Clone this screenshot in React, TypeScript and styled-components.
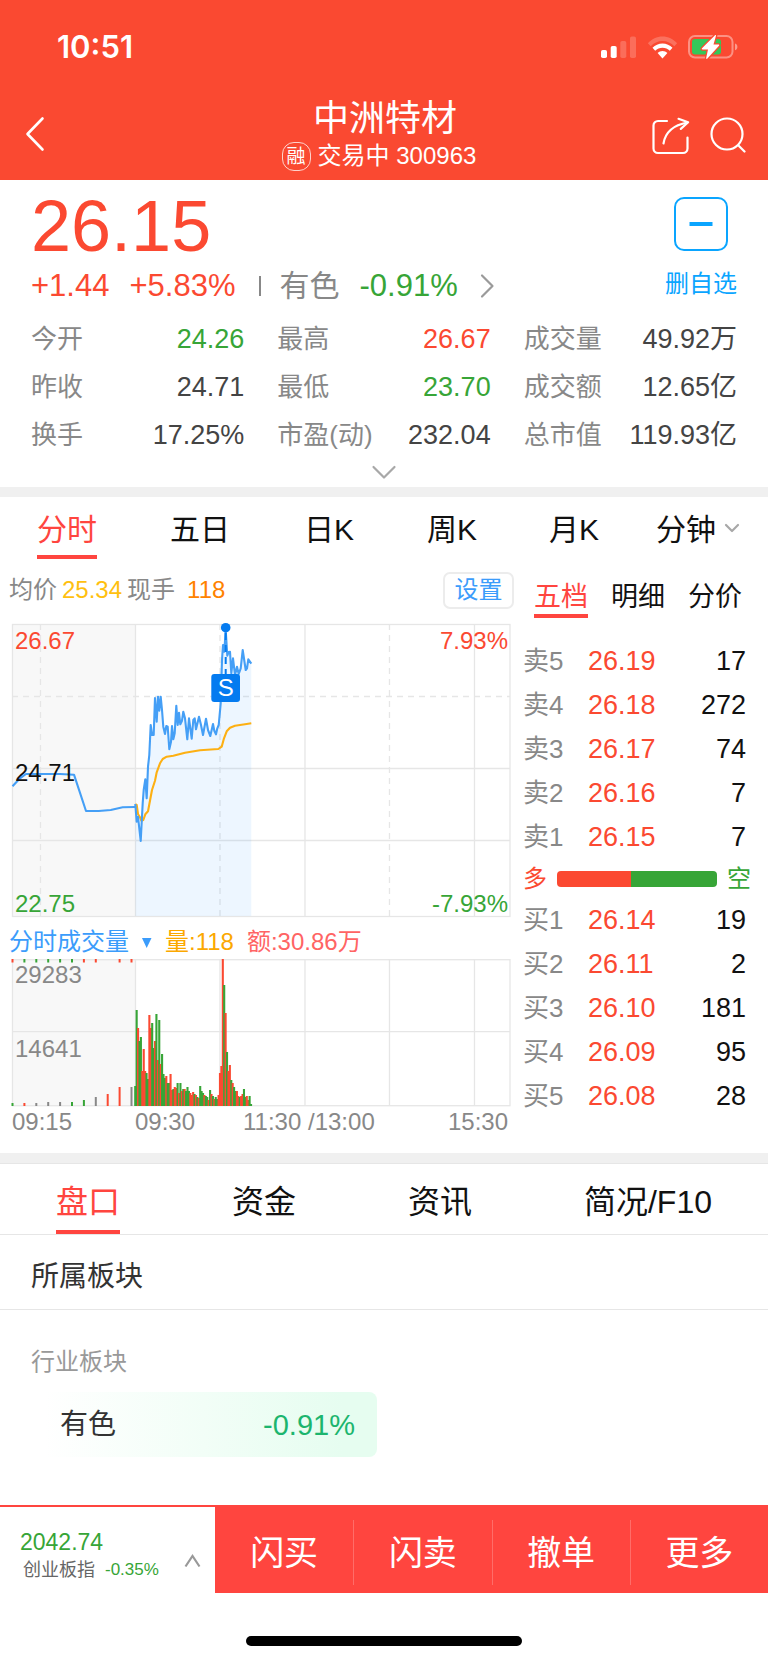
import React from 'react';
import styled, { createGlobalStyle } from 'styled-components';

const color = {
  brand: '#fa4931',
  accent: '#ff453f',
  up: '#fb4931',
  down: '#37a537',
  label: '#888888',
  value: '#444444',
  ink: '#111111',
  blue: '#3b9cfb',
  sky: '#0aa5ff',
  line: '#e6e6e6',
  band: '#f0f0f0',
};

const fontStack = '"Liberation Sans", "Noto Sans CJK SC", sans-serif';

const GlobalStyle = createGlobalStyle`
  *, *::before, *::after { box-sizing: border-box; }
  body { margin: 0; background: #fff; font-family: ${fontStack}; color: ${color.ink}; }
  button { margin: 0; padding: 0; border: 0; background: none; font: inherit; color: inherit; cursor: pointer; }
  h1, h2, h3, dl, dd, p { margin: 0; font-weight: 400; }
  svg { display: block; }
`;

const Page = styled.div`
  width: 100%;
  overflow: hidden;
`;

/* ---------- header ---------- */

const Header = styled.header`
  background: ${color.brand};
  color: #fff;
`;

const StatusBar = styled.div`
  display: flex;
  align-items: center;
  justify-content: space-between;
  height: 94px;
  padding: 0 30px 0 57px;
`;

const Clock = styled.time`
  font: 600 31px/36px Inter, sans-serif;
`;

const StatusIcons = styled.div`
  display: flex;
  align-items: center;
  gap: 10px;
`;

const NavBar = styled.nav`
  display: grid;
  grid-template-columns: 1fr auto 1fr;
  align-items: center;
  height: 86px;
  padding: 0 22px 2px 24px;
`;

const NavActions = styled.div`
  display: flex;
  justify-content: flex-end;
  gap: 20px;
`;

const TitleGroup = styled.div`
  display: flex;
  flex-direction: column;
  align-items: center;
  padding-bottom: 4px;
`;

const StockName = styled.h1`
  font-size: 36px;
  line-height: 44px;
`;

const StockMeta = styled.p`
  display: flex;
  align-items: center;
  gap: 7px;
  padding-right: 12px;
  font-size: 24px;
  line-height: 30px;
  white-space: pre;
`;

const MarginBadge = styled.span`
  width: 29px;
  height: 29px;
  border: 1px solid rgba(255, 255, 255, 0.75);
  border-radius: 12px;
  font-size: 19px;
  line-height: 27px;
  text-align: center;
`;

/* ---------- quote ---------- */

const Quote = styled.section`
  padding: 8px 31px 2px;
`;

const QuoteTop = styled.div`
  display: flex;
  justify-content: space-between;
`;

const Price = styled.div`
  color: ${color.up};
  font-size: 72px;
  line-height: 76px;
`;

const ChangeRow = styled.div`
  display: flex;
  align-items: center;
  gap: 20px;
  font-size: 31px;
  line-height: 44px;
`;

const Tone = styled.span<{ $color: string }>`
  color: ${(p) => p.$color};
`;

const SectorLink = styled.a`
  display: flex;
  align-items: center;
  gap: 20px;
  margin-left: -2px;
  color: ${color.label};
  text-decoration: none;
`;

const SectorLabel = styled.span`
  font-size: 30px;
`;

const Divider = styled.span`
  width: 2px;
  height: 20px;
  margin-left: 4px;
  background: ${color.label};
`;

const WatchButton = styled.button`
  display: flex;
  flex-direction: column;
  align-items: center;
  gap: 16px;
  align-self: flex-start;
  && {
    padding-top: 9px;
    color: ${color.sky};
    font-size: 24px;
    line-height: 34px;
  }
`;

const Stats = styled.dl`
  display: grid;
  grid-template-columns: repeat(3, 1fr);
  column-gap: 33px;
  padding-top: 7px;
  font-size: 27px;
  line-height: 48px;
`;

const Stat = styled.div`
  display: flex;
  justify-content: space-between;
  white-space: nowrap;
`;

const StatLabel = styled.dt`
  color: ${color.label};
  font-size: 26px;
`;

const StatValue = styled.dd<{ $color?: string }>`
  color: ${(p) => p.$color ?? color.value};
`;

const ExpandButton = styled.button`
  display: flex;
  align-items: center;
  justify-content: center;
  width: 100%;
  height: 26px;
`;

const Band = styled.div`
  height: 10px;
  background: ${color.band};
`;

/* ---------- tabs ---------- */

const PeriodTabs = styled.nav`
  display: grid;
  grid-template-columns: 134fr 132fr 126fr 120fr 124fr 132fr;
  height: 62px;
  font-size: 30px;
  line-height: 50px;
`;

const TabButton = styled.button<{ $active?: boolean }>`
  display: flex;
  align-items: flex-end;
  justify-content: center;
  && { color: ${(p) => (p.$active ? color.accent : color.ink)}; }

  & > span {
    border-bottom: 4px solid ${(p) => (p.$active ? color.accent : 'transparent')};
  }
`;

const MinuteTab = styled(TabButton)`
  gap: 8px;
  && { padding-right: 8px; }

  & > svg { margin-bottom: 26px; }
`;

/* ---------- chart + book ---------- */

const Trading = styled.div`
  display: grid;
  grid-template-columns: 514fr 254fr;
`;

const InfoRow = styled.div`
  display: flex;
  align-items: center;
  gap: 5px;
  height: 60px;
  padding: 2px 0 0 9px;
  color: ${color.label};
  font-size: 24px;
  line-height: 32px;
`;

const LastHand = styled.span`
  margin-left: 7px;
  color: #ff8200;
`;

const SettingsButton = styled.button`
  width: 71px;
  height: 37px;
  margin-left: auto;
  && {
    border: 2px solid #ececec;
    border-radius: 7px;
    color: ${color.blue};
  }
`;

const VolumeHeader = styled.div`
  display: flex;
  align-items: center;
  gap: 13px;
  height: 36px;
  padding: 2px 0 0 9px;
  font-size: 24px;
  line-height: 34px;
`;

const IndicatorButton = styled.button`
  display: flex;
  align-items: center;
  gap: 12px;
  && { color: ${color.blue}; }
`;

const ChartSvg = styled.svg`
  width: 100%;
  height: auto;
  font-family: ${fontStack};
  font-size: 24px;
`;

const Book = styled.section`
  padding: 0 22px 0 9px;
`;

const BookTabs = styled.div`
  display: flex;
  gap: 23px;
  height: 59px;
  padding-left: 11px;
  font-size: 27px;
  line-height: 34px;
`;

const BookTable = styled.table`
  width: 100%;
  border-collapse: collapse;
  font-size: 27px;
  line-height: 44px;

  th, td { padding: 0; font-weight: 400; text-align: left; }
`;

const BookLevel = styled.th`
  width: 65px;
  color: ${color.label};
  font-size: 26px;
`;

const BookPrice = styled.td`
  color: ${color.up};
`;

const BookSize = styled.td`
  && { text-align: right; }
`;

const SellSide = styled.div`
  padding-top: 21px;
`;

const Balance = styled.div`
  display: grid;
  grid-template-columns: 24px 1fr 24px;
  align-items: center;
  gap: 10px;
  height: 39px;
  margin-right: -5px;
  font-size: 24px;
  line-height: 38px;
`;

const BalanceBar = styled.div`
  display: grid;
  grid-template-columns: 74fr 86fr;
  height: 16px;
  border-radius: 4px;
  overflow: hidden;
`;

const BalancePart = styled.span<{ $color: string }>`
  background: ${(p) => p.$color};
`;

/* ---------- detail ---------- */

const DetailTabs = styled.nav`
  display: grid;
  grid-template-columns: 11fr 11fr 11fr 15fr;
  height: 72px;
  border-top: 1px solid ${color.line};
  border-bottom: 1px solid ${color.line};
  font-size: 32px;
  line-height: 56px;
`;

const SectionTitle = styled.h2`
  padding: 10px 31px 0;
  border-bottom: 1px solid ${color.line};
  color: #333;
  font-size: 28px;
  line-height: 64px;
`;

const Sector = styled.section`
  padding: 34px 31px 48px;
`;

const SectorKind = styled.h3`
  color: #999;
  font-size: 24px;
  line-height: 36px;
`;

const SectorCard = styled.a`
  display: flex;
  align-items: center;
  justify-content: space-between;
  width: 49%;
  height: 65px;
  margin-top: 12px;
  padding: 0 22px 0 29px;
  border-radius: 8px;
  background: linear-gradient(90deg, #fff 4%, #f2fef7 50%, #e6fdf0 90%);
  color: #333;
  font-size: 28px;
  line-height: 36px;
  text-decoration: none;
`;

const SectorChange = styled.span`
  color: #1cb56e;
  font-size: 29px;
`;

/* ---------- footer ---------- */

const TradeBar = styled.footer`
  display: grid;
  grid-template-columns: 215fr 553fr;
  height: 88px;
  border-top: 2px solid ${color.accent};
`;

const IndexButton = styled.button`
  display: flex;
  align-items: center;
  justify-content: space-between;
  && { padding: 11px 14px 0 20px; text-align: left; }
`;

const IndexText = styled.span`
  display: grid;
  color: ${color.down};
  font-size: 23px;
  line-height: 28px;
`;

const IndexName = styled.span`
  display: flex;
  gap: 10px;
  padding-left: 3px;
  font-size: 17px;
`;

const IndexLabel = styled.span`
  color: #666;
  font-size: 18px;
`;

const IndexArrow = styled.svg`
  margin-top: 10px;
`;

const Actions = styled.div`
  display: grid;
  grid-template-columns: repeat(4, 1fr);
  padding: 13px 0 8px;
  background: ${color.accent};
`;

const ActionButton = styled.button`
  && {
    color: #fff;
    font-size: 34px;
    line-height: 64px;
  }
  && + && { border-left: 1px solid rgba(255, 255, 255, 0.22); }
`;

const HomeArea = styled.div`
  padding: 43px 0 18px;
`;

const HomeIndicator = styled.div`
  width: 36%;
  height: 10px;
  margin: 0 auto;
  border-radius: 5px;
  background: #000;
`;

/* ---------- icons ---------- */

const SignalIcon = () => (
  <svg width="36" height="23" viewBox="0 0 36 23" fill="#fff" aria-hidden="true">
    <rect x="0" y="14" width="6" height="8" rx="1.8" />
    <rect x="9.7" y="10" width="6" height="12" rx="1.8" />
    <rect x="19.3" y="5" width="6" height="17" rx="1.8" opacity="0.2" />
    <rect x="29" y="0.5" width="6" height="21.5" rx="1.8" opacity="0.2" />
  </svg>
);

const WifiIcon = () => (
  <svg width="31" height="24" viewBox="0 0 31 24" fill="#fff" aria-hidden="true">
    <path d="M.9 8.2C4.700 4.100 9.800 1.500 15.500 1.500s10.800 2.600 14.600 6.700l-2.800 3C24.300 8.100 20.100 6.100 15.500 6.100s-8.800 2-11.800 5.100z" opacity="0.22" />
    <path d="M5.500 12.700c2.600-2.700 6.100-4.300 10-4.300s7.400 1.600 10 4.300l-2.700 3c-1.900-1.900-4.500-3-7.300-3s-5.400 1.100-7.300 3z" />
    <path d="M10.600 18c1.300-1.300 3-2.100 4.900-2.100s3.600.8 4.900 2.100l-4.900 5.500z" />
  </svg>
);

const BatteryIcon = () => (
  <svg width="50" height="26" viewBox="0 0 50 26" aria-hidden="true">
    <rect x="1" y="2" width="43.500" height="21.500" rx="6" fill="none" stroke="#fff" strokeOpacity="0.4" strokeWidth="2" />
    <path d="M47 9.500c1.700.7 2.400 1.800 2.400 3.400S48.700 15.600 47 16.300z" fill="#fff" opacity="0.45" />
    <rect x="4" y="5" width="29" height="15.500" rx="3" fill="#34c759" />
    <path
      d="M27 1.200 14 14.300c-.5.600-.2 1.200.6 1.200H20l-1.800 8.600c-.2 1 .6 1.100 1.200.5L31 11.800c.5-.6.200-1.300-.6-1.300H25.500L28 1.800c.3-.9-.4-1.200-1-.6z"
      fill="#fff"
      stroke={color.brand}
      strokeWidth="2.600"
      paintOrder="stroke"
    />
  </svg>
);

const BackIcon = () => (
  <svg width="22" height="36" viewBox="0 0 22 36" fill="none" stroke="#fff" strokeWidth="2.600" strokeLinecap="round" strokeLinejoin="round" aria-hidden="true">
    <path d="M18.500 2.500 3.500 18l15 15.500" />
  </svg>
);

const ShareIcon = () => (
  <svg width="38" height="38" viewBox="0 0 38 38" fill="none" stroke="#fff" strokeWidth="2.200" strokeLinecap="round" strokeLinejoin="round" aria-hidden="true">
    <path d="M15 4H6a4.500 4.500 0 0 0-4.500 4.500v23A4.500 4.500 0 0 0 6 36h25a4.500 4.500 0 0 0 4.500-4.500V20.500" />
    <path d="M11.500 26.500C13 17 19 8.500 35.500 5.500" />
    <path d="m26.500 1.800 9.600 3.500-7.300 6.600" />
  </svg>
);

const SearchIcon = () => (
  <svg width="36" height="38" viewBox="0 0 36 38" fill="none" stroke="#fff" strokeWidth="2.200" strokeLinecap="round" aria-hidden="true">
    <circle cx="17" cy="17" r="15.500" />
    <path d="m28.500 28.500 6 6" />
  </svg>
);

const Chevron = ({ w, h, d, width = 2.2, stroke = '#a8a8a8' }: { w: number; h: number; d: string; width?: number; stroke?: string }) => (
  <svg width={w} height={h} viewBox={`0 0 ${w} ${h}`} fill="none" stroke={stroke} strokeWidth={width} strokeLinecap="round" strokeLinejoin="round" aria-hidden="true">
    <path d={d} />
  </svg>
);

/* ---------- data ---------- */

const stats: { label: string; value: string; tone?: string }[] = [
  { label: '今开', value: '24.26', tone: color.down },
  { label: '最高', value: '26.67', tone: color.up },
  { label: '成交量', value: '49.92万' },
  { label: '昨收', value: '24.71' },
  { label: '最低', value: '23.70', tone: color.down },
  { label: '成交额', value: '12.65亿' },
  { label: '换手', value: '17.25%' },
  { label: '市盈(动)', value: '232.04' },
  { label: '总市值', value: '119.93亿' },
];

const sells = [
  ['卖5', '26.19', '17'],
  ['卖4', '26.18', '272'],
  ['卖3', '26.17', '74'],
  ['卖2', '26.16', '7'],
  ['卖1', '26.15', '7'],
];

const buys = [
  ['买1', '26.14', '19'],
  ['买2', '26.11', '2'],
  ['买3', '26.10', '181'],
  ['买4', '26.09', '95'],
  ['买5', '26.08', '28'],
];

const auctionLine = '12.5,167.3 20,159.3 26,155 60,155 74,155.7 86,192 98.7,192 110.7,191 122.7,188.3 135,188';

const priceLine =
  '135.3,185 136.7,202.7 138,197.7 140.7,222 142.7,184.3 143.7,171 145.3,160.3 146.7,179.3 148,147.7 149.3,136 150.7,106 152,116 153.7,116 155,79 156.7,102.7 158,77.7 159.3,91.7 160.7,77.7 162,91 163.3,107.7 165,115 166.3,107 167.7,107.7 169.3,130.3 171,122.7 172,107 173.3,120.3 174.7,114.3 176.3,86.7 177.7,106 179,93.7 180.3,105.3 182,101.7 183.3,92.7 185,99.3 187.3,120.3 189,99.3 191.7,119.7 193.3,101 194.7,99.3 196,110.3 199,97.7 201,106 203,116 206,99.7 208,111 210.3,117 213,105 214.3,111.7 216,115.3 217.3,109.3 218.7,106 220.7,84.3 222,41 223,26 224.3,32.7 225.7,11 227.3,36.7 228.7,33 230,32.7 231.3,54.3 233,39.3 235,56 237,47.7 238.7,55 240.7,49.3 242.7,31 245.7,51 247,49.3 248.3,40.3 251.3,44.7';

const averageLine =
  '135.3,185.3 136.7,186 138,195 139.7,197.7 141.3,201.7 143.3,201 145.3,195.3 148,192.3 152,171 155,161.7 156.7,153.3 160,144.3 162.7,140 166.7,137.7 173.3,136.7 185,133.7 200,131.3 218.3,130 221.7,127.7 224,119.3 226.7,112.3 230,108.7 235,106.7 245,105.3 251.3,104.3';

/* One entry per minute: direction letter, then bar height. */
const volume =
  'g20 g96 r78 g65 g69 r35 r57 r35 g33 g27 r91 r78 g83 g58 r65 g92 r46 g86 r42 g52 g32 g28 r30 g23 g23 r32 r16 g17 r19 r18 g23 r13 g23 r15 g17 r17 g15 g19 g15 r13 r11 r14 g12 r11 g9 r8 g20 g15 g13 r11 g10 g9 r6 g16 r12 g10 r7 g9 g7 r11 r33 r40 r147 g121 r93 g54 r35 r41 g26 r23 g19 g15 r15 r10 g9 r10 r12 g17 g9 r10 r6 g10 g2'.split(' ');

const auctionVolume = 'g3 r3 x3 x4 x4 g4 g6 x9 r12 r19 x19'.split(' ');
const auctionTicks = 'rgggggrr-rr'.split('');

const barColor: Record<string, string> = { g: color.down, r: color.up, x: '#888888' };

/* ---------- charts ---------- */

const PriceChart = () => (
  <ChartSvg viewBox="0 0 514 304" role="img" aria-label="分时走势">
    <rect x="12" y="5" width="123.500" height="292" fill="#f8f8f8" />
    <g stroke={color.line} strokeWidth="1.300" fill="none">
      <rect x="12.500" y="5.500" width="497.500" height="292" />
      <path d="M12 149.500H510M12 221.500H510M135.500 5V297M305 5V297M474.500 5V297" />
      <path d="M12 77.500H510M40.500 5V297M220 5V297M389.500 5V297" strokeDasharray="6 5" />
    </g>
    <polygon points={`135.500,297 ${priceLine} 251.300,297`} fill="#3b9cfb" fillOpacity="0.09" />
    <g fill="none" strokeWidth="2.100" strokeLinejoin="round">
      <polyline points={averageLine} stroke="#fdb013" />
      <polyline points={auctionLine} stroke="#459ff6" />
      <polyline points={priceLine} stroke="#459ff6" />
    </g>
    <text x="15" y="29.500" fill={color.up}>26.67</text>
    <text x="15" y="161.500" fill={color.ink}>24.71</text>
    <text x="15" y="292.500" fill={color.down}>22.75</text>
    <text x="508" y="29.500" fill={color.up} textAnchor="end">7.93%</text>
    <text x="508" y="292.500" fill={color.down} textAnchor="end">-7.93%</text>
    <path d="M225.700 14V55" stroke="#047bf0" strokeWidth="2" strokeDasharray="7 5" />
    <circle cx="225.700" cy="8.700" r="4.800" fill="#047bf0" />
    <rect x="211.300" y="55" width="28.700" height="28" rx="3" fill="#047bf0" />
    <text x="225.700" y="77" fill="#fff" textAnchor="middle">S</text>
  </ChartSvg>
);

const VolumeChart = () => (
  <ChartSvg viewBox="0 0 514 194" role="img" aria-label="分时成交量">
    <rect x="12" y="0" width="123.500" height="147" fill="#f8f8f8" />
    <g stroke={color.line} strokeWidth="1.300" fill="none">
      <rect x="12.500" y="0.700" width="497.500" height="146" />
      <path d="M12 72.700H510M135.500 0V147M220 0V147M305 0V147M389.500 0V147M474.500 0V147" />
    </g>
    {auctionTicks.map((t, i) => t !== '-' && <rect key={i} x={11.5 + i * 11.9} y="0" width="2" height="3.500" fill={barColor[t]} />)}
    {auctionVolume.map((v, i) => {
      const h = Number(v.slice(1));
      return <rect key={i} x={11.5 + i * 11.9} y={147 - h} width="2" height={h} fill={barColor[v[0]]} />;
    })}
    {volume.map((v, i) => {
      const h = Number(v.slice(1));
      return <rect key={i} x={134.2 + i * 1.412} y={147 - h} width="2.100" height={h} fill={barColor[v[0]]} />;
    })}
    <g fill={color.label}>
      <text x="15" y="23.500">29283</text>
      <text x="15" y="97.500">14641</text>
      <text x="12" y="171">09:15</text>
      <text x="135" y="171">09:30</text>
      <text x="243" y="171">11:30</text>
      <text x="308" y="171">/13:00</text>
      <text x="508" y="171" textAnchor="end">15:30</text>
    </g>
  </ChartSvg>
);

const BookRows = ({ rows }: { rows: string[][] }) => (
  <BookTable>
    <tbody>
      {rows.map(([level, price, size]) => (
        <tr key={level}>
          <BookLevel scope="row">{level}</BookLevel>
          <BookPrice>{price}</BookPrice>
          <BookSize>{size}</BookSize>
        </tr>
      ))}
    </tbody>
  </BookTable>
);

/* ---------- page ---------- */

export default function App() {
  return (
    <Page>
      <GlobalStyle />
      <Header>
        <StatusBar>
          <Clock>10:51</Clock>
          <StatusIcons>
            <SignalIcon />
            <WifiIcon />
            <BatteryIcon />
          </StatusIcons>
        </StatusBar>
        <NavBar>
          <div>
            <button type="button" aria-label="返回"><BackIcon /></button>
          </div>
          <TitleGroup>
            <StockName>中洲特材</StockName>
            <StockMeta>
              <MarginBadge>融</MarginBadge>
              <span>交易中 300963</span>
            </StockMeta>
          </TitleGroup>
          <NavActions>
            <button type="button" aria-label="分享"><ShareIcon /></button>
            <button type="button" aria-label="搜索"><SearchIcon /></button>
          </NavActions>
        </NavBar>
      </Header>

      <main>
        <Quote>
          <QuoteTop>
            <div>
              <Price>26.15</Price>
              <ChangeRow>
                <Tone $color={color.up}>+1.44</Tone>
                <Tone $color={color.up}>+5.83%</Tone>
                <Divider />
                <SectorLink href="#sector">
                  <SectorLabel>有色</SectorLabel>
                  <Tone $color={color.down}>-0.91%</Tone>
                  <Chevron w={18} h={26} d="M4 2.500 14.500 13 4 23.500" stroke="#9a9a9a" />
                </SectorLink>
              </ChangeRow>
            </div>
            <WatchButton type="button">
              <svg width="54" height="54" viewBox="0 0 54 54" fill="none" stroke="currentColor" aria-hidden="true">
                <rect x="1" y="1" width="52" height="52" rx="9" strokeWidth="2" />
                <path d="M15.500 27H38.500" strokeWidth="4" />
              </svg>
              删自选
            </WatchButton>
          </QuoteTop>
          <Stats>
            {stats.map((s) => (
              <Stat key={s.label}>
                <StatLabel>{s.label}</StatLabel>
                <StatValue $color={s.tone}>{s.value}</StatValue>
              </Stat>
            ))}
          </Stats>
          <ExpandButton type="button" aria-label="展开">
            <Chevron w={26} h={16} d="M2.500 3 13 13.500 23.500 3" />
          </ExpandButton>
        </Quote>

        <Band />

        <PeriodTabs>
          <TabButton type="button" $active><span>分时</span></TabButton>
          <TabButton type="button"><span>五日</span></TabButton>
          <TabButton type="button"><span>日K</span></TabButton>
          <TabButton type="button"><span>周K</span></TabButton>
          <TabButton type="button"><span>月K</span></TabButton>
          <MinuteTab type="button">
            <span>分钟</span>
            <Chevron w={16} h={10} d="M2 2 8 8 14 2" />
          </MinuteTab>
        </PeriodTabs>

        <Trading>
          <section>
            <InfoRow>
              <span>均价</span>
              <Tone $color="#ffc010">25.34</Tone>
              <span>现手</span>
              <LastHand>118</LastHand>
              <SettingsButton type="button">设置</SettingsButton>
            </InfoRow>
            <PriceChart />
            <VolumeHeader>
              <IndicatorButton type="button">
                分时成交量
                <svg width="11" height="11" viewBox="0 0 11 11" fill="currentColor" aria-hidden="true">
                  <path d="M1 1H10.500L5.700 11z" />
                </svg>
              </IndicatorButton>
              <Tone $color="#fba800">量:118</Tone>
              <Tone $color="#ff6464">额:30.86万</Tone>
            </VolumeHeader>
            <VolumeChart />
          </section>

          <Book>
            <BookTabs>
              <TabButton type="button" $active><span>五档</span></TabButton>
              <TabButton type="button"><span>明细</span></TabButton>
              <TabButton type="button"><span>分价</span></TabButton>
            </BookTabs>
            <SellSide>
              <BookRows rows={sells} />
            </SellSide>
            <Balance>
              <Tone $color={color.up}>多</Tone>
              <BalanceBar>
                <BalancePart $color={color.up} />
                <BalancePart $color={color.down} />
              </BalanceBar>
              <Tone $color={color.down}>空</Tone>
            </Balance>
            <BookRows rows={buys} />
          </Book>
        </Trading>

        <Band />

        <DetailTabs>
          <TabButton type="button" $active><span>盘口</span></TabButton>
          <TabButton type="button"><span>资金</span></TabButton>
          <TabButton type="button"><span>资讯</span></TabButton>
          <TabButton type="button"><span>简况/F10</span></TabButton>
        </DetailTabs>
        <SectionTitle id="sector">所属板块</SectionTitle>
        <Sector>
          <SectorKind>行业板块</SectorKind>
          <SectorCard href="#sector">
            <span>有色</span>
            <SectorChange>-0.91%</SectorChange>
          </SectorCard>
        </Sector>
      </main>

      <TradeBar>
        <IndexButton type="button">
          <IndexText>
            <span>2042.74</span>
            <IndexName>
              <IndexLabel>创业板指</IndexLabel>
              <span>-0.35%</span>
            </IndexName>
          </IndexText>
          <IndexArrow width="17" height="14" viewBox="0 0 17 14" fill="none" stroke="#999" strokeWidth="2.200" aria-hidden="true">
            <path d="M1.500 12.500 8.500 2l7 10.500" />
          </IndexArrow>
        </IndexButton>
        <Actions>
          <ActionButton type="button">闪买</ActionButton>
          <ActionButton type="button">闪卖</ActionButton>
          <ActionButton type="button">撤单</ActionButton>
          <ActionButton type="button">更多</ActionButton>
        </Actions>
      </TradeBar>
      <HomeArea>
        <HomeIndicator />
      </HomeArea>
    </Page>
  );
}
